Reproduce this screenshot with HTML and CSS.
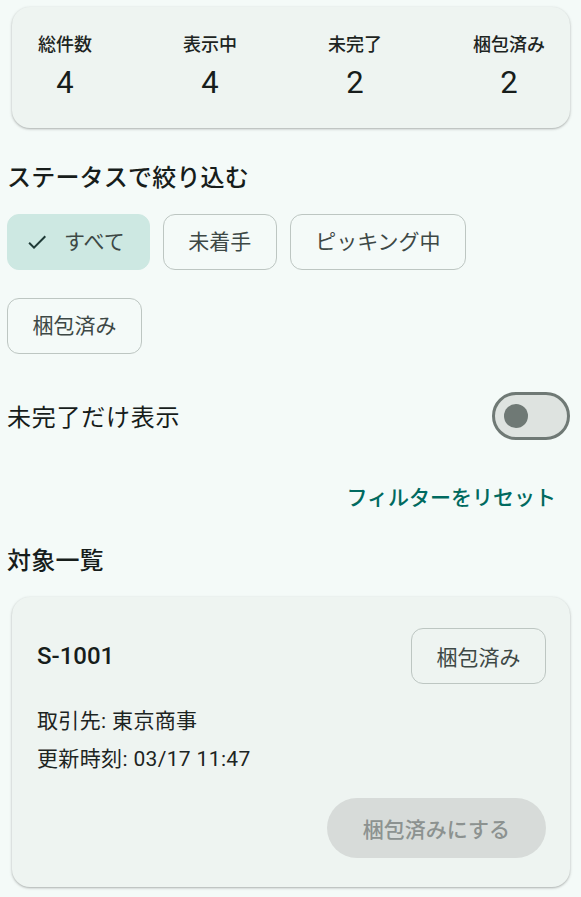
FILE: index.html
```html
<!DOCTYPE html>
<html lang="ja">
<head>
<meta charset="utf-8">
<title>出荷一覧</title>
<link rel="stylesheet" href="styles.css">
</head>
<body>
<div class="page">
  <section class="card summary">
    <div class="stat"><span class="stat-label">総件数</span><span class="stat-value">4</span></div>
    <div class="stat"><span class="stat-label">表示中</span><span class="stat-value">4</span></div>
    <div class="stat"><span class="stat-label">未完了</span><span class="stat-value">2</span></div>
    <div class="stat"><span class="stat-label">梱包済み</span><span class="stat-value">2</span></div>
  </section>

  <h2 class="section-title filter-title">ステータスで絞り込む</h2>

  <div class="chips">
    <button class="chip selected"><svg class="chip-check" viewBox="0 0 24 24" width="24" height="24"><path d="M9 16.17L4.83 12l-1.42 1.41L9 19 21 7l-1.41-1.41z"/></svg><span>すべて</span></button>
    <button class="chip">未着手</button>
    <button class="chip">ピッキング中</button>
    <button class="chip">梱包済み</button>
  </div>

  <div class="toggle-row">
    <span class="toggle-label">未完了だけ表示</span>
    <span class="switch"><span class="switch-thumb"></span></span>
  </div>

  <div class="reset-row">
    <button class="text-btn">フィルターをリセット</button>
  </div>

  <h2 class="section-title list-title">対象一覧</h2>

  <article class="card item">
    <div class="item-head">
      <span class="item-id">S-1001</span>
      <span class="status-chip">梱包済み</span>
    </div>
    <p class="item-line first">取引先: 東京商事</p>
    <p class="item-line">更新時刻: 03/17 11:47</p>
    <div class="item-actions">
      <button class="filled-btn" disabled>梱包済みにする</button>
    </div>
  </article>
</div>
</body>
</html>
```

FILE: styles.css
```css
* { box-sizing: border-box; }

html, body {
  margin: 0;
  padding: 0;
  background: #f4faf8;
}

body {
  font-family: "Roboto", "Noto Sans CJK JP", sans-serif;
  color: #171d1b;
  width: 581px;
  height: 897px;
  overflow: hidden;
}

.page {
  padding: 7px 7px 0 7px;
  display: flex;
  flex-direction: column;
}

button {
  font-family: inherit;
  margin: 0;
  cursor: pointer;
}

.card {
  background: #eef4f1;
  border-radius: 18px;
  margin: 0 4px 0 5px;
  box-shadow: 0 1px 2px rgba(0, 0, 0, 0.22), 0 1px 3px 1px rgba(0, 0, 0, 0.07);
}

/* summary */
.summary {
  display: flex;
  justify-content: space-between;
  padding: 26px 25px 25px 26px;
}

.stat {
  display: flex;
  flex-direction: column;
  align-items: center;
  gap: 6px;
}

.stat-label {
  font-size: 18px;
  line-height: 24px;
  font-weight: 500;
  color: #1d2422;
}

.stat-value {
  font-size: 31px;
  line-height: 40px;
  font-weight: 400;
  color: #171d1b;
}

/* section titles */
.section-title {
  margin: 0;
  font-size: 24px;
  line-height: 32px;
  font-weight: 500;
  letter-spacing: 0.2px;
  color: #171d1b;
}

.filter-title { margin-top: 34px; }
.list-title { margin-top: 19px; }

/* chips */
.chips {
  margin-top: 20px;
  display: flex;
  flex-wrap: wrap;
  gap: 28px 13px;
}

.chip {
  height: 56px;
  padding: 0 24.5px;
  border: 1px solid #bdc6c2;
  border-radius: 12px;
  background: transparent;
  font-size: 21px;
  font-weight: 400;
  color: #3d4845;
  display: flex;
  align-items: center;
  line-height: 1;
}

.chip.selected {
  background: #cde8e2;
  border-color: #cde8e2;
  padding: 0 24px 0 17px;
  gap: 15px;
}

.chip-check {
  fill: #1f3a36;
  display: block;
}

/* toggle */
.toggle-row {
  margin-top: 38px;
  height: 48px;
  display: flex;
  align-items: center;
  justify-content: space-between;
}

.toggle-label {
  font-size: 24px;
  line-height: 32px;
  margin-top: 3px;
  letter-spacing: 0.75px;
  color: #171d1b;
}

.switch {
  width: 78px;
  height: 48px;
  margin-right: 4px;
  border: 3px solid #6f7975;
  border-radius: 24px;
  background: #dee3e0;
  display: flex;
  align-items: center;
  padding-left: 9px;
}

.switch-thumb {
  width: 24px;
  height: 24px;
  border-radius: 50%;
  background: #6f7975;
}

/* reset */
.reset-row {
  margin-top: 26px;
  display: flex;
  justify-content: flex-end;
}

.text-btn {
  height: 60px;
  padding: 0 18px;
  border: none;
  background: transparent;
  font-size: 21px;
  font-weight: 500;
  color: #006a60;
  border-radius: 30px;
}

/* item card */
.item {
  margin-top: 20px;
  padding: 31px 24px 29px 25px;
}

.item-head {
  display: flex;
  align-items: center;
  justify-content: space-between;
}

.item-id {
  font-size: 24px;
  line-height: 32px;
  font-weight: 500;
  color: #171d1b;
}

.status-chip {
  height: 56px;
  padding: 0 24.5px;
  border: 1px solid #bdc6c2;
  border-radius: 12px;
  font-size: 21px;
  font-weight: 400;
  color: #3d4845;
  display: flex;
  align-items: center;
}

.item-line {
  margin: 0;
  font-size: 21px;
  line-height: 38px;
  letter-spacing: 0.35px;
  color: #1d2422;
}

.item-line.first { margin-top: 18px; }

.item-actions {
  margin-top: 20px;
  display: flex;
  justify-content: flex-end;
}

.filled-btn {
  height: 60px;
  padding: 0 36px;
  border: none;
  border-radius: 30px;
  background: #d7dbd9;
  color: #8c9290;
  font-size: 21px;
  font-weight: 500;
  cursor: default;
}
```
